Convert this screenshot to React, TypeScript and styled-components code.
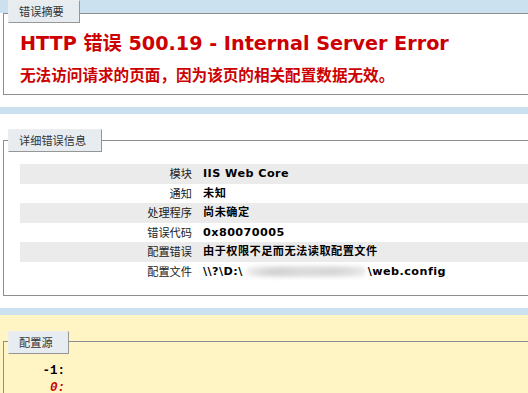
import React from "react";
import styled, { createGlobalStyle } from "styled-components";

const GlobalStyle = createGlobalStyle`
  html, body { margin: 0; padding: 0; }
  body {
    background: #cbe1ef;
    overflow: hidden;
    font-family: "DejaVu Sans", "Noto Sans CJK SC", sans-serif;
    font-size: 11.2px;
    color: #000;
  }
`;

const Page = styled.div`
  width: 660px;
`;

const Container = styled.div<{ $tone?: "white" | "yellow"; $top: number; $bottom: number }>`
  background: ${(p) => (p.$tone === "yellow" ? "#fff5c4" : "#ffffff")};
  padding: ${(p) => p.$top}px 0 ${(p) => p.$bottom}px 3px;
  & + & {
    margin-top: 7px;
  }
`;

const Fieldset = styled.section<{ $offset: number }>`
  margin-top: ${(p) => p.$offset}px;
  border: 1px solid #8e8e8e;
  border-right: none;
  padding: 0 0 10px 16px;
  & > :first-child {
    margin-top: ${(p) => -(p.$offset + 1)}px;
  }
`;

const Tab = styled.div`
  width: fit-content;
  margin-left: -12px;
  padding: 4px 15px 4px 10px;
  line-height: 13px;
  color: #333;
  background: #e7ecf0;
  border-top: 1px solid #ededed;
  border-left: 1px solid #ededed;
  border-right: 1px solid #969696;
  border-bottom: 1px solid #969696;
  font-family: "Noto Sans CJK SC", sans-serif;
  font-size: 11.2px;
`;

const Title = styled.h2`
  margin: 9px 0 0 0;
  font-size: 19.2px;
  line-height: 23px;
  font-weight: bold;
  color: #cc0000;
  white-space: nowrap;
`;

const Subtitle = styled.h3`
  margin: 9px 0 0 0;
  font-family: "Noto Sans CJK SC", sans-serif;
  font-size: 15.6px;
  line-height: 20px;
  font-weight: bold;
  color: #cc0000;
  white-space: nowrap;
`;

const Table = styled.table`
  width: 572px;
  margin: 12px 0 4px 0;
  border-collapse: collapse;
  border: none;
`;

const Row = styled.tr<{ $alt?: boolean }>`
  background: ${(p) => (p.$alt ? "#ebebeb" : "transparent")};
`;

const Label = styled.th`
  width: 172px;
  padding: 3px 11px 3px 0;
  text-align: right;
  vertical-align: top;
  font-weight: normal;
  color: #222;
  line-height: 13.5px;
  font-family: "Noto Sans CJK SC", sans-serif;
  font-size: 11.2px;
`;

const Value = styled.td`
  padding: 3px 0;
  text-align: left;
  vertical-align: top;
  font-weight: bold;
  line-height: 13.5px;
  letter-spacing: 0.45px;
  white-space: nowrap;
`;

const Redacted = styled.span`
  display: inline-block;
  vertical-align: middle;
  width: 121px;
  height: 11px;
  margin: 0 2px;
  background:
    radial-gradient(ellipse 32px 6px at 28px 6px, #cfcfcf 0%, rgba(207,207,207,0) 100%),
    radial-gradient(ellipse 42px 6px at 92px 5px, #d4d4d4 0%, rgba(212,212,212,0) 100%),
    linear-gradient(90deg, rgba(220,220,220,0.2), #dcdcdc 30%, #dedede 70%, rgba(220,220,220,0.3));
  filter: blur(2px);
  border-radius: 6px;
`;

const Code = styled.pre`
  margin: 9px 0 0 0;
  font-family: "Liberation Mono", "DejaVu Sans Mono", monospace;
  font-size: 12.5px;
  line-height: 17px;
  font-weight: bold;
  color: #000;
`;

const Highlight = styled.span`
  color: #cc0000;
  font-style: italic;
  font-weight: bold;
`;

const rows: { label: string; value: React.ReactNode }[] = [
  { label: "模块", value: "IIS Web Core" },
  { label: "通知", value: "未知" },
  { label: "处理程序", value: "尚未确定" },
  { label: "错误代码", value: "0x80070005" },
  { label: "配置错误", value: "由于权限不足而无法读取配置文件" },
  {
    label: "配置文件",
    value: (
      <>
        \\?\D:\<Redacted />\web.config
      </>
    ),
  },
];

export default function App() {
  return (
    <>
      <GlobalStyle />
      <Page>
        <Container $top={0} $bottom={12}>
          <Fieldset $offset={13}>
            <Tab>错误摘要</Tab>
            <Title>HTTP 错误 500.19 - Internal Server Error</Title>
            <Subtitle>无法访问请求的页面，因为该页的相关配置数据无效。</Subtitle>
          </Fieldset>
        </Container>
        <Container $top={15} $bottom={12}>
          <Fieldset $offset={11}>
            <Tab>详细错误信息</Tab>
            <Table>
              <tbody>
                {rows.map((r, i) => (
                  <Row key={r.label} $alt={i % 2 === 0}>
                    <Label>{r.label}</Label>
                    <Value>{r.value}</Value>
                  </Row>
                ))}
              </tbody>
            </Table>
          </Fieldset>
        </Container>
        <Container $tone="yellow" $top={16} $bottom={40}>
          <Fieldset $offset={10}>
            <Tab>配置源</Tab>
            <Code>
              {"   -1: \n    "}
              <Highlight>0:</Highlight>
              {" "}
            </Code>
          </Fieldset>
        </Container>
      </Page>
    </>
  );
}
